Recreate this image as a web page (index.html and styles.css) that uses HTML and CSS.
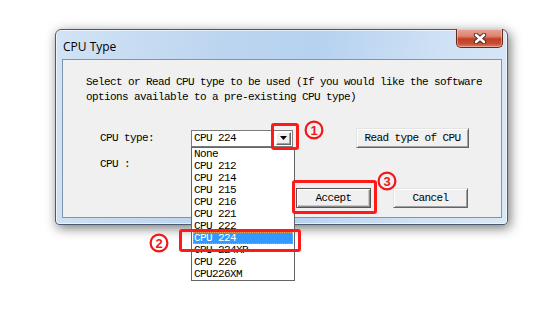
FILE: index.html
```html
<!DOCTYPE html>
<html lang="en">
<head>
    <meta charset="UTF-8">
    <title>CPU Type</title>
    <link rel="stylesheet" href="styles.css">
</head>
<body>
    <div class="window">
        <div class="titlebar">
            <span class="title">CPU Type</span>
            <button class="close-btn">
                <svg width="16" height="11" viewBox="0 0 16 11">
                    <path d="M4 2 L12 9 M12 2 L4 9" stroke="#4a2a22" stroke-width="4.4" stroke-linecap="round"/>
                    <path d="M4 2 L12 9 M12 2 L4 9" stroke="#fff" stroke-width="2.6" stroke-linecap="round"/>
                </svg>
            </button>
        </div>
        <div class="client">
            <p class="intro">Select or Read CPU type to be used (If you would like the software<br>options available to a pre-existing CPU type)</p>

            <div class="row row-type">
                <span class="label">CPU type:</span>
                <div class="combo">
                    <span class="combo-value">CPU 224</span>
                    <span class="combo-arrow">
                        <svg width="7" height="4" viewBox="0 0 7 4"><path d="M0 0 H7 L3.5 4 Z" fill="#000"/></svg>
                    </span>
                </div>
                <button class="btn btn-read">Read type of CPU</button>
            </div>

            <div class="row row-cpu">
                <span class="label">CPU :</span>
            </div>

            <div class="row row-actions">
                <button class="btn btn-default">Accept</button>
                <button class="btn">Cancel</button>
            </div>
        </div>
    </div>

    <ul class="dropdown">
        <li>None</li>
        <li>CPU 212</li>
        <li>CPU 214</li>
        <li>CPU 215</li>
        <li>CPU 216</li>
        <li>CPU 221</li>
        <li>CPU 222</li>
        <li class="selected">CPU 224</li>
        <li>CPU 224XP</li>
        <li>CPU 226</li>
        <li>CPU226XM</li>
    </ul>

    <!-- red annotation marks -->
    <div class="mark mark-arrow"></div>
    <div class="mark mark-item"></div>
    <div class="mark mark-accept"></div>

    <svg class="num num-1" width="20" height="20" viewBox="0 0 20 20">
        <circle cx="10" cy="10" r="8.4" fill="none" stroke="#f01818" stroke-width="2.2"/>
        <text x="10" y="14.6" text-anchor="middle">1</text>
    </svg>
    <svg class="num num-2" width="20" height="20" viewBox="0 0 20 20">
        <circle cx="10" cy="10" r="8.4" fill="none" stroke="#f01818" stroke-width="2.2"/>
        <text x="10" y="14.6" text-anchor="middle">2</text>
    </svg>
    <svg class="num num-3" width="20" height="20" viewBox="0 0 20 20">
        <circle cx="10" cy="10" r="8.4" fill="none" stroke="#f01818" stroke-width="2.2"/>
        <text x="10" y="14.6" text-anchor="middle">3</text>
    </svg>
</body>
</html>
```

FILE: styles.css
```css
body {
    margin: 0;
    width: 547px;
    height: 314px;
    background: #fff;
    position: relative;
    overflow: hidden;
    font-family: "Liberation Mono", "DejaVu Sans Mono", monospace;
    font-size: 11px;
    letter-spacing: -0.6px;
    color: #000;
}
.window {
    margin: 29px 0 0 55px;
    width: 453px;
    height: 196px;
    box-sizing: border-box;
    border: 1px solid #4b5b70;
    border-radius: 6px 6px 4px 4px;
    background: linear-gradient(100deg, #d2e3f5 0%, #bcd5ef 35%, #b6d2f0 55%, #cfe1f4 80%, #d9e8f6 100%);
    box-shadow: 2px 3px 12px rgba(0,0,0,0.55), inset 0 0 0 1px rgba(255,255,255,0.6);
    padding: 0 5px 6px 6px;
    display: flex;
    flex-direction: column;
}
.titlebar {
    height: 29px;
    display: flex;
    justify-content: space-between;
    align-items: flex-start;
    flex-shrink: 0;
}
.title {
    font-family: "Open Sans", "Noto Sans", sans-serif;
    font-size: 12px;
    letter-spacing: 0;
    margin-top: 8px;
    margin-left: 1px;
    color: #000;
}
.close-btn {
    width: 47px;
    height: 19px;
    margin-top: -1px;
    margin-right: -1px;
    border: 1px solid #6b2a1f;
    border-top: none;
    border-radius: 0 0 5px 5px;
    background: linear-gradient(#eaa594 0%, #dc846e 40%, #c23f26 55%, #c64d33 80%, #e07d63 100%);
    box-shadow: inset 0 0 0 1px rgba(255,255,255,0.35);
    display: flex;
    align-items: center;
    justify-content: center;
    padding: 0;
}
.client {
    flex: 1;
    background: #f0f0f0;
    border: 1px solid #8294ab;
    padding: 15px 0 0 23px;
}
.intro {
    margin: 0;
    line-height: 15px;
}
.row {
    display: flex;
    align-items: center;
    height: 20px;
    padding-left: 14px;
}
.row-type {
    margin-top: 23px;
}
.label {
    width: 91px;
}
.combo {
    width: 102px;
    height: 17px;
    box-sizing: border-box;
    border: 1px solid #7a7a7a;
    background: #fff;
    display: flex;
    align-items: center;
    justify-content: space-between;
    padding: 0 1px 0 2px;
}
.combo-arrow {
    width: 15px;
    height: 13px;
    box-sizing: border-box;
    background: #f0f0f0;
    border: 1px solid;
    border-color: #fff #696969 #696969 #fff;
    box-shadow: inset -1px -1px #a0a0a0;
    display: flex;
    align-items: center;
    justify-content: center;
}
.btn {
    font: inherit;
    letter-spacing: inherit;
    color: #000;
    height: 20px;
    width: 75px;
    padding: 0;
    background: #f0f0f0;
    border: 1px solid;
    border-color: #e3e3e3 #646464 #646464 #e3e3e3;
    box-shadow: inset 1px 1px #fff, inset -1px -1px #a0a0a0;
}
.btn-read {
    width: 113px;
    margin-left: 63px;
}
.row-cpu {
    margin-top: 6px;
}
.row-actions {
    margin-top: 14px;
    padding-left: 210px;
    gap: 22px;
}
.btn-default {
    border-color: #555;
    box-shadow: inset 1px 1px #fff, inset -1px -1px #8a8a8a, inset -2px -2px #c8c8c8;
}
.dropdown {
    position: absolute;
    left: 191px;
    top: 147px;
    width: 104px;
    height: 134px;
    box-sizing: border-box;
    margin: 0;
    padding: 0 1px;
    list-style: none;
    background: #fff;
    border: 1px solid #646464;
}
.dropdown li {
    height: 12px;
    line-height: 12px;
    padding-left: 1px;
}
.dropdown .selected {
    background: #3399ff;
    color: #fff;
    outline: 1px dotted #e0a050;
    outline-offset: -1px;
}
.mark {
    position: absolute;
    box-sizing: border-box;
    border: 3px solid #ff1a1a;
    border-radius: 3px;
}
.mark-arrow {
    left: 271px;
    top: 123px;
    width: 28px;
    height: 27px;
}
.mark-item {
    left: 179px;
    top: 229px;
    width: 122px;
    height: 23px;
}
.mark-accept {
    left: 292px;
    top: 180px;
    width: 85px;
    height: 34px;
}
.num {
    position: absolute;
}
.num text {
    font-family: "Liberation Sans", Arial, sans-serif;
    font-weight: bold;
    font-size: 13px;
    fill: #f01818;
    letter-spacing: 0;
}
.num-1 {
    left: 304px;
    top: 120px;
}
.num-2 {
    left: 149px;
    top: 233px;
}
.num-3 {
    left: 377px;
    top: 171px;
}
```
